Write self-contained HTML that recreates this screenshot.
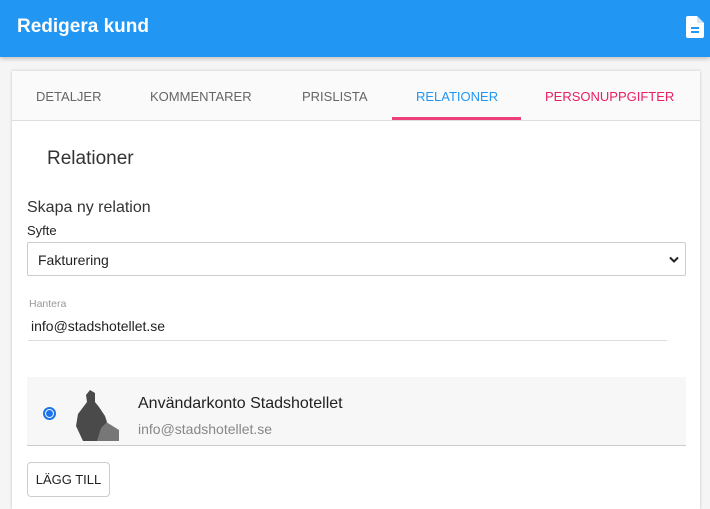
<!DOCTYPE html>
<html><head><style>
*{box-sizing:border-box;margin:0;padding:0}
html,body{width:710px;height:509px;overflow:hidden}
body{background:#f5f5f5;font-family:"Liberation Sans",sans-serif;position:relative}
.hdr{position:absolute;left:0;top:0;width:710px;height:57px;background:#2196f3;box-shadow:0 2px 4px rgba(0,0,0,.2)}
.hdr h1{position:absolute;left:17px;top:16px;color:#fff;font-size:19px;font-weight:bold}
.card{position:absolute;left:12px;top:71px;width:688px;height:438px;background:#fff;box-shadow:0 0 3px rgba(0,0,0,.2)}
.tabs{position:absolute;left:0;top:0;width:688px;height:50px;background:#fafafa;border-bottom:1px solid #ddd}
.tab{position:absolute;top:18px;font-size:13px;color:#666}
.abs{position:absolute}
</style></head><body>
<div class="hdr"><h1>Redigera kund</h1>
<svg class="abs" style="left:686px;top:16px" width="18" height="22" viewBox="0 0 18 22"><path d="M2 0h9l7 7v13a2 2 0 0 1-2 2H2a2 2 0 0 1-2-2V2a2 2 0 0 1 2-2z" fill="#fff"/><path d="M11 0v7h7" fill="#cfe6fb"/><rect x="5" y="11" width="8" height="2" fill="#2196f3"/><rect x="5" y="15" width="8" height="2" fill="#2196f3"/></svg>
</div>
<div class="card">
<div class="tabs">
<span class="tab" style="left:24px">DETALJER</span>
<span class="tab" style="left:138px">KOMMENTARER</span>
<span class="tab" style="left:290px">PRISLISTA</span>
<span class="tab" style="left:404px;color:#2196f3">RELATIONER</span>
<span class="tab" style="left:533px;color:#e91e63">PERSONUPPGIFTER</span>
<div class="abs" style="left:380px;top:46px;width:129px;height:3px;background:#ec407a"></div>
</div>
<div class="abs" style="left:35px;top:77px;font-size:19px;color:#333">Relationer</div>
<div class="abs" style="left:15px;top:128px;font-size:16px;color:#333">Skapa ny relation</div>
<div class="abs" style="left:15px;top:152px;font-size:13px;color:#222">Syfte</div>
<div class="abs" style="left:15px;top:171px;width:659px;height:34px;border:1px solid #ccc;border-radius:2px;font-size:14px;color:#222;padding:9px 10px">Fakturering
<svg class="abs" style="right:6px;top:13px" width="10" height="8" viewBox="0 0 10 8"><path d="M1 1.5l4 4 4-4" stroke="#222" stroke-width="2" fill="none"/></svg></div>
<div class="abs" style="left:17px;top:227px;font-size:10.5px;color:#999">Hantera</div>
<div class="abs" style="left:19px;top:247px;font-size:14px;color:#222">info@stadshotellet.se</div>
<div class="abs" style="left:16px;top:269px;width:639px;height:1px;background:#ddd"></div>
<div class="abs" style="left:15px;top:306px;width:659px;height:69px;background:#f7f7f7;border-bottom:1px solid #ccc"></div>
<div class="abs" style="left:31px;top:336px;width:13px;height:13px;border-radius:50%;border:2px solid #1a73e8;background:#fff"><div style="margin:1px;width:7px;height:7px;border-radius:50%;background:#1a73e8"></div></div>
<svg class="abs" style="left:63px;top:319px" width="44" height="51" viewBox="0 0 44 51"><path d="M22 51L16 40 28 30 44 40V51z" fill="#777"/><path d="M8 51L1 36 3 24 9 16 12 12 11 5 15 0 20 3 20 12 24 17 30 26 32 32 26 38 22 51z" fill="#4a4a4a"/></svg>
<div class="abs" style="left:126px;top:324px;font-size:16px;color:#222">Användarkonto Stadshotellet</div>
<div class="abs" style="left:126px;top:350px;font-size:14px;color:#888">info@stadshotellet.se</div>
<div class="abs" style="left:15px;top:391px;width:83px;height:35px;border:1px solid #ccc;border-radius:4px;font-size:13px;color:#222;text-align:center;line-height:33px">LÄGG TILL</div>
</div>
</body></html>
